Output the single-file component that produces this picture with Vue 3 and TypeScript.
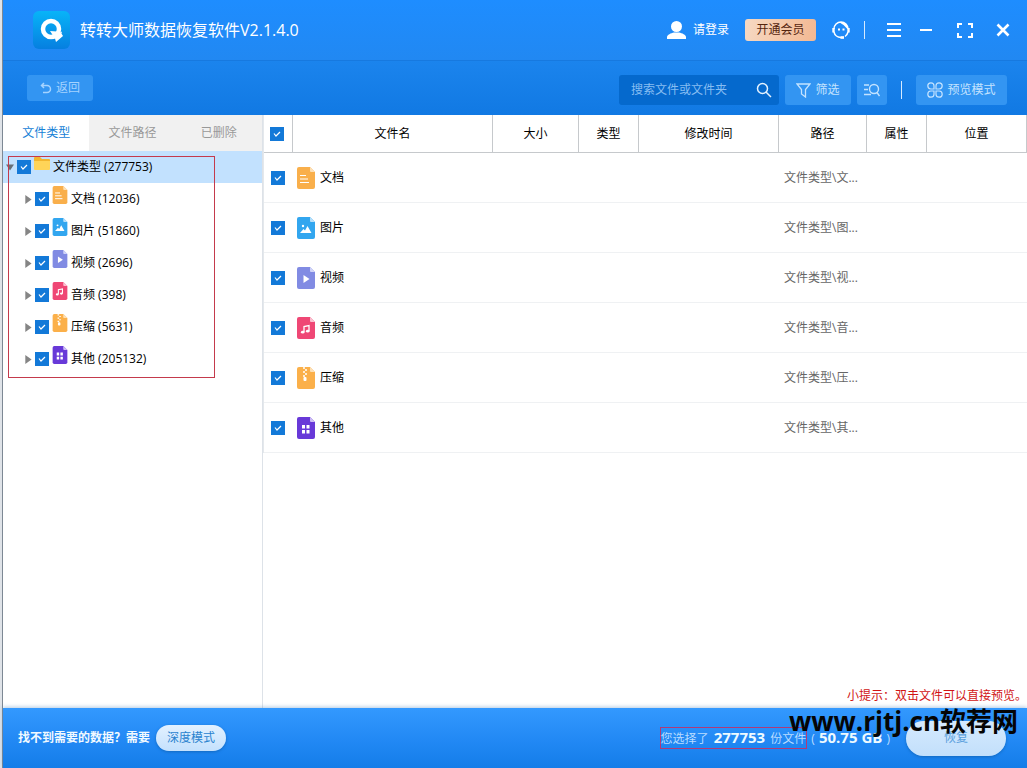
<script setup lang="ts">
import { computed, ref } from 'vue'

interface Category {
  id: string
  name: string
  count: number
  path: string
  checked: boolean
}

const categories = ref<Category[]>([
  { id: 'doc', name: '文档', count: 12036, path: '文件类型\\文...', checked: true },
  { id: 'image', name: '图片', count: 51860, path: '文件类型\\图...', checked: true },
  { id: 'video', name: '视频', count: 2696, path: '文件类型\\视...', checked: true },
  { id: 'audio', name: '音频', count: 398, path: '文件类型\\音...', checked: true },
  { id: 'zip', name: '压缩', count: 5631, path: '文件类型\\压...', checked: true },
  { id: 'other', name: '其他', count: 205132, path: '文件类型\\其...', checked: true },
])

const tabs = ['文件类型', '文件路径', '已删除']
const activeTab = ref(0)
const expanded = ref(true)
const keyword = ref('')
const total = 277753

const allChecked = computed({
  get: () => categories.value.every((c) => c.checked),
  set: (value: boolean) => categories.value.forEach((c) => (c.checked = value)),
})
</script>

<template>
  <div class="app">
    <svg class="symbols" aria-hidden="true">
      <symbol id="file-doc" viewBox="0 0 18 22">
        <path d="M2 0h11l5 5v15a2 2 0 0 1-2 2H2a2 2 0 0 1-2-2V2a2 2 0 0 1 2-2z" fill="#f9af4b" />
        <path d="M13 0l5 5h-4a1 1 0 0 1-1-1z" fill="#fde0b6" />
        <path d="M3 8.500h6M3 12h8M3 15.500h9" stroke="#fff" stroke-width="1.200" />
      </symbol>
      <symbol id="file-image" viewBox="0 0 18 22">
        <path d="M2 0h11l5 5v15a2 2 0 0 1-2 2H2a2 2 0 0 1-2-2V2a2 2 0 0 1 2-2z" fill="#32a6ef" />
        <path d="M13 0l5 5h-4a1 1 0 0 1-1-1z" fill="#b6e0fb" />
        <path d="M3 16l3.500-4 1.500 1.500L10.500 9l4 7z" fill="#fff" />
        <circle cx="6" cy="9" r="1.200" fill="#fff" />
      </symbol>
      <symbol id="file-video" viewBox="0 0 18 22">
        <path d="M2 0h11l5 5v15a2 2 0 0 1-2 2H2a2 2 0 0 1-2-2V2a2 2 0 0 1 2-2z" fill="#818be3" />
        <path d="M13 0l5 5h-4a1 1 0 0 1-1-1z" fill="#d0d4f8" />
        <path d="M6.500 8v8l6-4z" fill="#fff" />
      </symbol>
      <symbol id="file-audio" viewBox="0 0 18 22">
        <path d="M2 0h11l5 5v15a2 2 0 0 1-2 2H2a2 2 0 0 1-2-2V2a2 2 0 0 1 2-2z" fill="#ef4775" />
        <path d="M13 0l5 5h-4a1 1 0 0 1-1-1z" fill="#fbc0d0" />
        <path d="M7 15V9.500l5-1V14" fill="none" stroke="#fff" stroke-width="1.300" />
        <ellipse cx="5.700" cy="15.200" rx="1.800" ry="1.400" fill="#fff" />
        <ellipse cx="10.700" cy="14.200" rx="1.800" ry="1.400" fill="#fff" />
      </symbol>
      <symbol id="file-zip" viewBox="0 0 18 22">
        <path d="M2 0h11l5 5v15a2 2 0 0 1-2 2H2a2 2 0 0 1-2-2V2a2 2 0 0 1 2-2z" fill="#fbb04a" />
        <path d="M13 0l5 5h-4a1 1 0 0 1-1-1z" fill="#fde0b6" />
        <path d="M6 1h2M8 3h2M6 5h2M8 7h2M6 9h2" stroke="#fff" stroke-width="1.400" />
        <rect x="6.500" y="10" width="3" height="4" rx="1" fill="#fff" />
      </symbol>
      <symbol id="file-other" viewBox="0 0 18 22">
        <path d="M2 0h11l5 5v15a2 2 0 0 1-2 2H2a2 2 0 0 1-2-2V2a2 2 0 0 1 2-2z" fill="#6839d8" />
        <path d="M13 0l5 5h-4a1 1 0 0 1-1-1z" fill="#cdbdf5" />
        <path d="M5 8h3v3.500H5zM9.500 8h3v3.500h-3zM5 13h3v3.500H5zM9.500 13h3v3.500h-3z" fill="#fff" />
      </symbol>
    </svg>

    <header class="titlebar">
      <svg class="logo" viewBox="0 0 38 38" aria-hidden="true">
        <defs>
          <linearGradient id="logo-fill" x1="0" y1="0" x2="0" y2="1">
            <stop offset="0" stop-color="#08b4f8" />
            <stop offset="1" stop-color="#067fe0" />
          </linearGradient>
        </defs>
        <rect width="37" height="38" rx="6" fill="url(#logo-fill)" />
        <circle cx="18" cy="18" r="8" fill="none" stroke="#fff" stroke-width="4.500" />
        <path d="M17 20l7 .5v2.500l5-2.500-.5 2L30 25l-7 6-1-3.500z" fill="#fff" />
      </svg>
      <h1>转转大师数据恢复软件V2.1.4.0</h1>
      <button class="login" type="button">
        <svg width="20" height="18" viewBox="0 0 20 18" aria-hidden="true">
          <circle cx="9.500" cy="5.500" r="5.500" fill="#fff" />
          <path d="M0 18v-2c0-2 4-4 7-4.500h5c3 .5 7 2.500 7 4.500v2z" fill="#fff" />
        </svg>
        请登录
      </button>
      <button class="vip" type="button">开通会员</button>
      <button class="icon service" type="button" aria-label="客服">
        <svg viewBox="0 0 18 18" fill="none" stroke="#fff" stroke-width="1.500">
          <path d="M2 8a7 7 0 0 1 14 0M9 1.500c2.500 1 5 3 7 6M2 11a7 7 0 0 0 7 5.500h3M16 11c-.5 2-1.500 3.500-3 4.500" />
          <path d="M1.500 7v4.500M16.500 7v4.500M8.500 16.500h3.500" stroke-width="2.400" />
          <path d="M6 8.500h2M10.500 8.500h2" stroke-width="2" />
        </svg>
      </button>
      <span class="divider"></span>
      <button class="icon menu" type="button" aria-label="菜单">
        <svg viewBox="0 0 18 18" stroke="#fff" stroke-width="2"><path d="M2 3h14M2 9h14M2 15h14" /></svg>
      </button>
      <button class="icon minimize" type="button" aria-label="最小化">
        <svg viewBox="0 0 18 18" stroke="#fff" stroke-width="2"><path d="M3 9h12" /></svg>
      </button>
      <button class="icon maximize" type="button" aria-label="最大化">
        <svg viewBox="0 0 18 18" fill="none" stroke="#fff" stroke-width="2">
          <path d="M2 7V3h4M12 3h4v4M16 12v4h-4M6 16H2v-4" />
        </svg>
      </button>
      <button class="icon close" type="button" aria-label="关闭">
        <svg viewBox="0 0 18 18" stroke="#fff" stroke-width="2.600"><path d="M3.500 3.500l11 11M14.500 3.500l-11 11" /></svg>
      </button>
    </header>

    <nav class="toolbar">
      <button class="tool back" type="button">
        <svg width="12" height="12" viewBox="0 0 12 12" fill="none" stroke="currentColor" stroke-width="1.500">
          <path d="M4 1L1.500 3.500 4 6M1.500 3.500H7a3.500 3.500 0 0 1 0 7H3" />
        </svg>
        返回
      </button>
      <div class="search">
        <input v-model="keyword" type="text" placeholder="搜索文件或文件夹" aria-label="搜索文件或文件夹" />
        <button type="button" aria-label="搜索">
          <svg width="16" height="16" viewBox="0 0 16 16" fill="none" stroke="#e4f2ff" stroke-width="1.500">
            <circle cx="6.500" cy="6.500" r="5" /><path d="M10 10l5 5" />
          </svg>
        </button>
      </div>
      <button class="tool filter" type="button">
        <svg width="15" height="15" viewBox="0 0 15 15" fill="none" stroke="currentColor" stroke-width="1.300">
          <path d="M1 1h13L9.500 6.500V14L5.500 11V6.500z" />
        </svg>
        筛选
      </button>
      <button class="tool list" type="button" aria-label="列表搜索">
        <svg width="16" height="14" viewBox="0 0 16 14" fill="none" stroke="currentColor" stroke-width="1.400">
          <circle cx="10" cy="6" r="4.500" /><path d="M13 9.500l2.500 3.500M0 2h5M0 6.500h4M0 11.500h7" />
        </svg>
      </button>
      <span class="divider"></span>
      <button class="tool preview" type="button">
        <svg width="16" height="16" viewBox="0 0 16 16" fill="none" stroke="currentColor" stroke-width="1.200">
          <path d="M7 7H3.800A3.100 3.100 0 1 1 7 3.800zM9 7V3.800A3.100 3.100 0 1 1 12.200 7zM7 9v3.200A3.100 3.100 0 1 1 3.800 9zM9 9h3.200A3.100 3.100 0 1 1 9 12.200z" />
        </svg>
        预览模式
      </button>
    </nav>

    <main class="body">
      <aside class="sidebar">
        <div class="tabs" role="tablist">
          <button
            v-for="(tab, index) in tabs"
            :key="tab"
            type="button"
            role="tab"
            :aria-selected="activeTab === index"
            :class="{ active: activeTab === index }"
            @click="activeTab = index"
          >
            {{ tab }}
          </button>
        </div>
        <div class="tree">
          <div class="node root">
            <button class="arrow" type="button" aria-label="展开" @click="expanded = !expanded">
              <svg viewBox="0 0 8 8"><path d="M0 1h8L4 7z" fill="#666f78" /></svg>
            </button>
            <input id="node-root" v-model="allChecked" type="checkbox" />
            <svg class="folder" viewBox="0 0 16 14" aria-hidden="true">
              <path d="M0 1a1 1 0 0 1 1-1h5l2 2h7a1 1 0 0 1 1 1v8H0z" fill="#f3b52e" />
              <path d="M0 4h16v8a1 1 0 0 1-1 1H1a1 1 0 0 1-1-1z" fill="#ffd458" />
            </svg>
            <label for="node-root">文件类型 ({{ total }})</label>
          </div>
          <template v-if="expanded">
            <div v-for="item in categories" :key="item.id" class="node child">
              <button class="arrow" type="button" :aria-label="'展开' + item.name">
                <svg viewBox="0 0 8 10"><path d="M1 0l7 5-7 5z" fill="#858585" /></svg>
              </button>
              <input :id="'node-' + item.id" v-model="item.checked" type="checkbox" />
              <svg class="file" aria-hidden="true"><use :href="'#file-' + item.id" /></svg>
              <label :for="'node-' + item.id">{{ item.name }} ({{ item.count }})</label>
            </div>
          </template>
          <div class="tree-mark"></div>
        </div>
      </aside>

      <section class="content">
        <table>
          <colgroup>
            <col class="c-check" /><col /><col class="c-size" /><col class="c-type" />
            <col class="c-time" /><col class="c-path" /><col class="c-attr" /><col class="c-place" />
          </colgroup>
          <thead>
            <tr>
              <th class="check-all"><input v-model="allChecked" type="checkbox" aria-label="全选" /></th>
              <th>文件名</th><th>大小</th><th>类型</th><th>修改时间</th><th>路径</th><th>属性</th><th>位置</th>
            </tr>
          </thead>
          <tbody>
            <tr v-for="item in categories" :key="item.id">
              <td class="check"><input v-model="item.checked" type="checkbox" :aria-label="item.name" /></td>
              <td>
                <div class="name">
                  <svg width="18" height="22" aria-hidden="true"><use :href="'#file-' + item.id" /></svg>
                  {{ item.name }}
                </div>
              </td>
              <td></td><td></td><td></td>
              <td class="path">{{ item.path }}</td>
              <td></td><td></td>
            </tr>
          </tbody>
        </table>
        <p class="tip">小提示：双击文件可以直接预览。</p>
      </section>
    </main>

    <footer class="footer">
      <strong>找不到需要的数据？需要</strong>
      <button class="deep" type="button">深度模式</button>
      <span class="selected">您选择了 <b>{{ total }}</b> 份文件</span>
      <span class="size">( <b>50.75 GB</b> )</span>
      <button class="recover" type="button">恢复</button>
      <div class="watermark">www.rjtj.cn软荐网</div>
    </footer>
  </div>
</template>

<style>
body {
  margin: 0;
}
</style>

<style scoped>
.app {
  box-sizing: border-box;
  min-height: 100vh;
  display: flex;
  flex-direction: column;
  border-left: 2px solid #dfe3e8;
  box-shadow: inset 1px 0 #7d8894;
  padding-left: 1px;
  background: #fff;
  color: #000;
  font: 12px/18px "Open Sans", "Noto Sans CJK SC", sans-serif;
}

.symbols {
  position: absolute;
  width: 0;
  height: 0;
}

svg {
  display: block;
  flex: none;
}

button {
  display: flex;
  align-items: center;
  justify-content: center;
  flex: none;
  padding: 0;
  border: 0;
  background: none;
  color: inherit;
  font: inherit;
  white-space: nowrap;
  cursor: pointer;
}

input[type="checkbox"] {
  appearance: none;
  flex: none;
  display: block;
  width: 14px;
  height: 14px;
  margin: 0;
  border: 1px solid #1379d8;
  background: #fff;
}

input[type="checkbox"]:checked {
  background: #1379d8 url("data:image/svg+xml,%3Csvg xmlns='http://www.w3.org/2000/svg' viewBox='0 0 12 12'%3E%3Cpath d='M3 5.500l2 2.500 4-4' fill='none' stroke='white' stroke-width='1.200'/%3E%3C/svg%3E") center / 12px 12px no-repeat;
}

.titlebar {
  box-sizing: border-box;
  display: flex;
  align-items: center;
  height: 61px;
  padding: 0 15px 0 30px;
  border-bottom: 1px solid #1779df;
  background: linear-gradient(#1e8dff, #2188f2);
  color: #fff;
}

.logo {
  width: 38px;
  height: 38px;
}

h1 {
  flex: 1;
  margin: 0 0 0 9px;
  font-size: 16px;
  font-weight: 400;
  line-height: 24px;
}

.login {
  gap: 6px;
  margin-right: 16px;
}

.vip {
  width: 71px;
  height: 22px;
  border-radius: 3px;
  background: linear-gradient(100deg, #f6d9c3, #f3b892);
  color: #54250f;
}

.icon {
  width: 18px;
  height: 18px;
}

.icon svg {
  width: 18px;
  height: 18px;
}

.service {
  margin: 0 14px 0 16px;
}

.divider {
  width: 1px;
  height: 18px;
  background: #d6eaff;
}

.menu {
  margin-left: 20px;
}

.minimize {
  margin-left: 14px;
}

.maximize {
  margin-left: 21px;
}

.close {
  margin-left: 20px;
}

.toolbar {
  display: flex;
  align-items: flex-start;
  gap: 6px;
  padding: 14px 20px 10px 24px;
  background: linear-gradient(#1b84ed, #1179e3);
}

.tool {
  height: 30px;
  gap: 4px;
  border-radius: 3px;
  background: #3395f2;
  color: #c4e3ff;
}

.back {
  width: 66px;
  height: 26px;
  margin-right: auto;
  color: #a5d3ff;
}

.search {
  display: flex;
  width: 160px;
  height: 30px;
  border-radius: 3px;
  background: #0569cd;
}

.search input {
  flex: 1;
  min-width: 0;
  padding: 0 0 0 12px;
  border: 0;
  outline: 0;
  background: none;
  color: #fff;
  font: inherit;
}

.search input::placeholder {
  color: #86bdf2;
  opacity: 1;
}

.search button {
  width: 30px;
}

.filter {
  width: 66px;
}

.list {
  width: 30px;
}

.toolbar .divider {
  margin: 6px 8px 0;
}

.preview {
  width: 91px;
}

.body {
  flex: 1;
  display: flex;
}

.sidebar {
  box-sizing: border-box;
  flex: none;
  width: 260px;
  border-right: 1px solid #dde2e8;
}

.tabs {
  display: grid;
  grid-template-columns: repeat(3, 1fr);
  height: 36px;
  background: #f1f1f1;
  color: #999;
}

.tabs .active {
  background: #fff;
  color: #1681d6;
}

.tree {
  position: relative;
}

.node {
  display: flex;
  align-items: center;
  gap: 3px;
  height: 32px;
  padding-left: 3px;
}

.root {
  background: #c2e1fe;
}

.child {
  padding-left: 21px;
}

.arrow,
.arrow svg {
  width: 8px;
  height: 9px;
}

.folder {
  align-self: flex-start;
  width: 16px;
  height: 14px;
  margin-top: 6px;
}

.file {
  align-self: flex-start;
  width: 16px;
  height: 18px;
  margin-top: 3px;
}

.tree-mark {
  position: absolute;
  top: 5px;
  left: 5px;
  width: 205px;
  height: 220px;
  border: 1px solid #c43a4c;
  pointer-events: none;
}

.content {
  flex: 1;
  min-width: 0;
  display: flex;
  flex-direction: column;
}

table {
  width: 100%;
  table-layout: fixed;
  border-collapse: separate;
  border-spacing: 0;
  border-left: 1px solid #e4e8ec;
}

.c-check {
  width: 29px;
}

.c-size {
  width: 86px;
}

.c-type,
.c-attr {
  width: 60px;
}

.c-time {
  width: 140px;
}

.c-path {
  width: 88px;
}

.c-place {
  width: 100px;
}

th {
  box-sizing: border-box;
  height: 38px;
  padding: 0;
  border-right: 1px solid #c6c9cc;
  border-bottom: 1px solid #c6c9cc;
  font-weight: 400;
}

.check-all {
  padding-left: 6px;
}

td {
  box-sizing: border-box;
  height: 50px;
  padding: 0;
  border-bottom: 1px solid #eff1f3;
}

.check {
  padding-left: 7px;
}

.name {
  display: flex;
  align-items: center;
  gap: 5px;
  padding-left: 4px;
}

.path {
  padding-left: 5px;
  color: #666;
  white-space: nowrap;
}

.tip {
  margin: auto 0 3px;
  color: #d11414;
  text-align: right;
}

.footer {
  position: relative;
  display: flex;
  align-items: center;
  height: 60px;
  padding: 0 21px 0 15px;
  background: linear-gradient(#3399fe, #2087f3 60%, #147de8);
  box-shadow: 0 -1px 4px rgba(60, 120, 180, 0.4);
  color: #f1f9ff;
}

.deep {
  width: 70px;
  height: 26px;
  margin: 0 auto 0 6px;
  border-radius: 13px;
  background: linear-gradient(#e3f1ff, #c4e1fd);
  box-shadow: 0 1px 3px #1269c0;
  color: #2a83cf;
}

.selected,
.size {
  color: #b9dcff;
  white-space: nowrap;
}

.footer b {
  color: #eefaff;
  font-size: 15px;
  font-weight: 700;
}

.selected {
  margin-right: 4px;
  border: 1px solid #b03a78;
}

.size {
  margin-right: 16px;
}

.selected b {
  margin: 0 2px;
}

.size b {
  margin: 0 1px;
}

.recover {
  width: 100px;
  height: 35px;
  border-radius: 18px;
  background: linear-gradient(#d5eafe, #c2dffb);
  box-shadow: 0 1px 3px #1269c0;
  color: #5aa0dc;
}

.watermark {
  position: absolute;
  top: -4px;
  right: 9px;
  color: #050505;
  font-size: 26px;
  font-weight: 700;
  line-height: 34px;
  white-space: nowrap;
  pointer-events: none;
}
</style>
